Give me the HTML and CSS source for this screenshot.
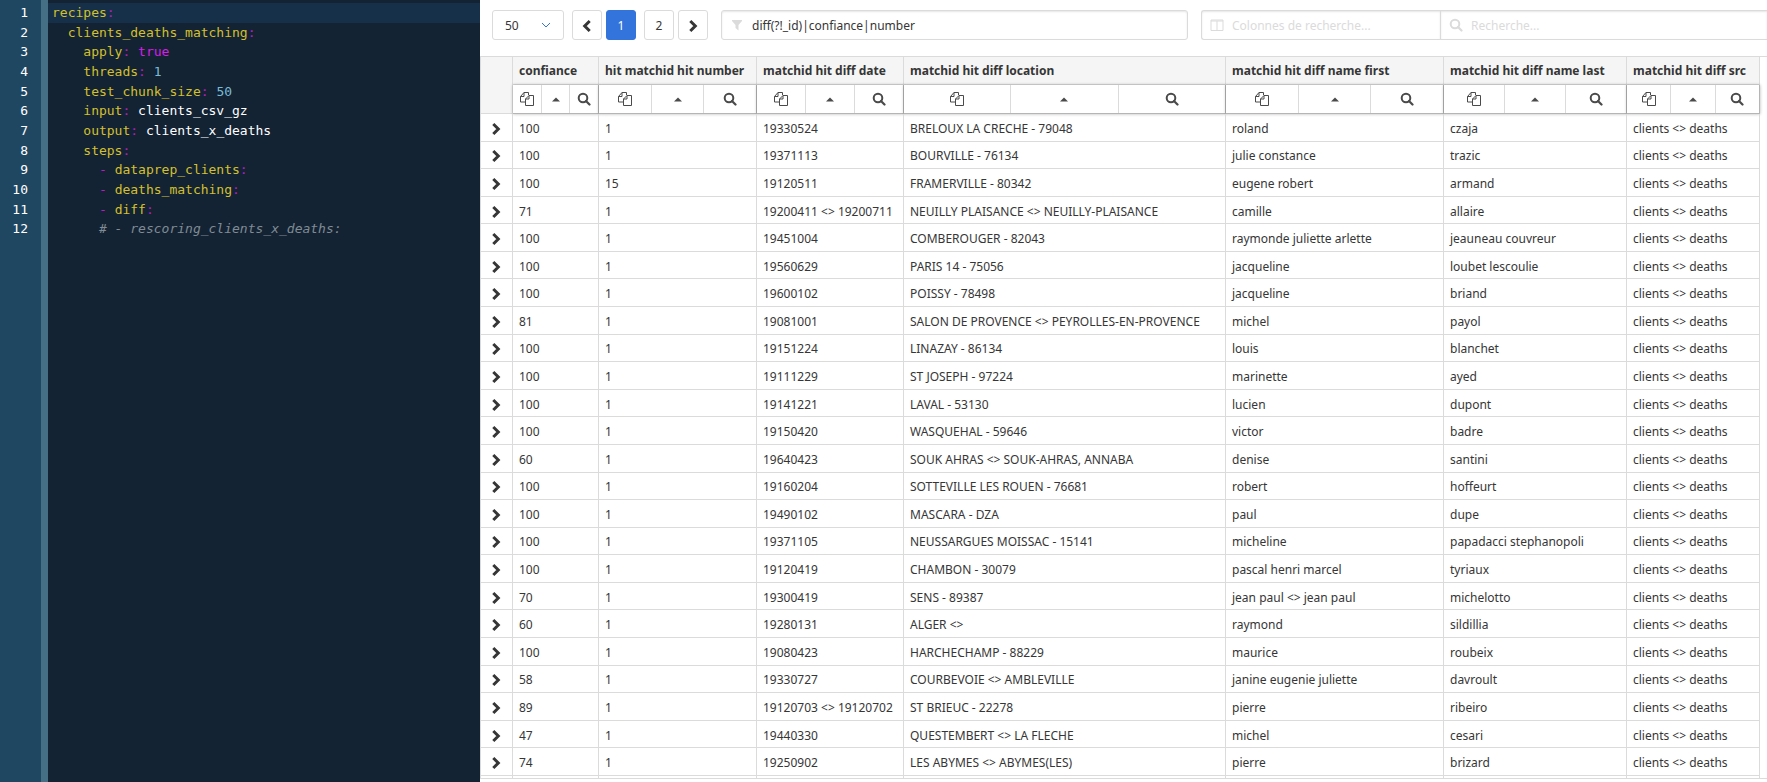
FILE: index.html
```html
<!DOCTYPE html>
<html lang="fr">
<head>
<meta charset="utf-8">
<title>matchID</title>
<link rel="stylesheet" href="styles.css">
</head>
<body>
<svg class="sprite" aria-hidden="true">
  <symbol id="copy" viewBox="0 0 14 14"><path d="M5.500 10H.5V4.500L4 .5h4.500V3M.5 4.500H4V.5M5.500 13.500V7L9 3.500h4.500v10zM5.500 7H9V3.500" fill="none" stroke="currentColor"/></symbol>
  <symbol id="caret" viewBox="0 0 14 14"><path d="M3 9.500 7 5.500l4 4z" fill="currentColor"/></symbol>
  <symbol id="search" viewBox="0 0 14 14"><circle cx="6" cy="6" r="4.300" fill="none" stroke="currentColor" stroke-width="2"/><path d="m9 9 3.500 3.500" stroke="currentColor" stroke-width="2.200" stroke-linecap="round"/></symbol>
  <symbol id="right" viewBox="0 0 14 14"><path d="m4.300 2 5 5-5 5" fill="none" stroke="currentColor" stroke-width="3"/></symbol>
  <symbol id="left" viewBox="0 0 14 14"><path d="m9.700 2-5 5 5 5" fill="none" stroke="currentColor" stroke-width="3"/></symbol>
  <symbol id="filter" viewBox="0 0 14 14"><path d="M2 2h10v1L8.500 7v5.500L5.500 10V7L2 3z" fill="currentColor"/></symbol>
  <symbol id="columns" viewBox="0 0 14 14"><path d="M1 2h12v10.500H1zM1 3h12M7 3v9" fill="none" stroke="currentColor"/></symbol>
</svg>
<div class="app">
  <section class="editor" aria-label="Recette">
    <ol class="code">
      <li class="active"><code><b>recipes</b><i>:</i></code></li>
      <li><code>  <b>clients_deaths_matching</b><i>:</i></code></li>
      <li><code>    <b>apply</b><i>:</i> <span class="bool">true</span></code></li>
      <li><code>    <b>threads</b><i>:</i> <span class="num">1</span></code></li>
      <li><code>    <b>test_chunk_size</b><i>:</i> <span class="num">50</span></code></li>
      <li><code>    <b>input</b><i>:</i> clients_csv_gz</code></li>
      <li><code>    <b>output</b><i>:</i> clients_x_deaths</code></li>
      <li><code>    <b>steps</b><i>:</i></code></li>
      <li><code>      <i>-</i> <b>dataprep_clients</b><i>:</i></code></li>
      <li><code>      <i>-</i> <b>deaths_matching</b><i>:</i></code></li>
      <li><code>      <i>-</i> <b>diff</b><i>:</i></code></li>
      <li><code>      <span class="comment"># - rescoring_clients_x_deaths:</span></code></li>
    </ol>
  </section>
  <main class="results">
    <div class="toolbar">
      <div class="size"><select aria-label="Lignes par page"><option>50</option><option>100</option></select><svg viewBox="0 0 10 6"><path d="m1 1 4 4 4-4" fill="none" stroke="currentColor"/></svg></div>
      <nav class="pages" aria-label="Pages">
        <button aria-label="Page précédente"><svg class="icon"><use href="#left"/></svg></button>
        <button class="current">1</button>
        <button class="second">2</button>
        <button aria-label="Page suivante"><svg class="icon"><use href="#right"/></svg></button>
      </nav>
      <label class="field filter"><svg class="icon"><use href="#filter"/></svg><input type="text" aria-label="Filtre des colonnes" value="diff(?!_id)|confiance|number"></label>
      <div class="group">
        <label class="field columns"><svg class="icon"><use href="#columns"/></svg><input type="text" aria-label="Colonnes de recherche" placeholder="Colonnes de recherche..."></label>
        <label class="field query"><svg class="icon"><use href="#search"/></svg><input type="text" aria-label="Recherche" placeholder="Recherche..."></label>
      </div>
    </div>
    <div class="sheet">
      <table>
        <colgroup><col class="c-open"><col class="c-conf"><col class="c-num"><col class="c-date"><col class="c-loc"><col class="c-first"><col class="c-last"><col class="c-src"></colgroup>
        <thead>
          <tr class="titles"><th rowspan="2"></th><th>confiance</th><th>hit matchid hit number</th><th>matchid hit diff date</th><th>matchid hit diff location</th><th>matchid hit diff name first</th><th>matchid hit diff name last</th><th>matchid hit diff src</th></tr>
          <tr class="tools" id="tools"></tr>
        </thead>
        <tbody id="rows"></tbody>
        <tfoot><tr><td></td><td></td><td></td><td></td><td></td><td></td><td></td><td></td></tr></tfoot>
      </table>
    </div>
  </main>
</div>
<script src="app.js"></script>
</body>
</html>
```
FILE: styles.css
```css
* { box-sizing: border-box; }
body { margin: 0; font: 12px/18px "Noto Sans", sans-serif; color: #363636; background: #fff; }
button, input, select { font: inherit; color: inherit; }
.sprite { display: none; }
.icon { width: 14px; height: 14px; display: block; flex: none; }
.app { display: grid; grid-template-columns: 480px minmax(0, 1fr); height: 100vh; }

.editor { background: linear-gradient(to right, #204762 41px, #446f85 41px 48px, #132334 48px); overflow: hidden; }
.code { margin: 0; padding: 3px 0 0; list-style: none; counter-reset: line; font: 13px/18px "DejaVu Sans Mono", monospace; display: flex; flex-direction: column; height: 239px; }
.code li { counter-increment: line; display: grid; grid-template-columns: 48px 1fr; flex: 1; align-items: stretch; align-content: stretch; }
.code li::before { content: counter(line); color: #fff; text-align: right; padding: 1px 20px 0 0; }
.code code { font: inherit; white-space: pre; color: #fff; padding: 1px 0 0 4px; }
.code .active code { background: #173049; }
.code b { font-weight: 400; color: #d3c02b; }
.code i { font-style: normal; color: #b31ec0; }
.bool { color: #d91ee6; }
.num { color: #79bbd6; }
.comment { color: #808b93; font-style: italic; }

.results { display: flex; flex-direction: column; min-width: 0; min-height: 0; padding-bottom: 3px; }
.toolbar { display: flex; height: 56px; flex: none; padding: 10px 0 16px 12px; }
.size { position: relative; width: 72px; }
.size select { width: 100%; height: 30px; appearance: none; background: #fff; border: 1px solid #dbdbdb; border-radius: 3px; padding: 1px 12px 0; }
.size svg { position: absolute; right: 13px; top: 12px; width: 10px; height: 6px; color: #3273dc; pointer-events: none; }
.pages { display: flex; gap: 4px; margin: 0 13px 0 8px; }
.pages button { width: 30px; height: 30px; padding: 1px 0 0; display: flex; align-items: center; justify-content: center; background: #fff; border: 1px solid #dbdbdb; border-radius: 3px; }
.pages .current { background: #3273dc; border-color: #3273dc; color: #fff; }
.pages .second { margin-left: 4px; }
.field { display: flex; align-items: center; gap: 8px; height: 30px; min-width: 0; padding-left: 8px; border: 1px solid #dbdbdb; border-radius: 3px; box-shadow: inset 0 1px 2px rgba(10, 10, 10, .1); color: #dbdbdb; }
.field input { flex: 1; min-width: 0; border: 0; outline: 0; background: none; padding: 1px 0 0; color: #363636; }
.field input::placeholder { color: #dbdbdb; opacity: 1; }
.filter { flex: 457 1 0; margin-right: 13px; }
.group { display: flex; flex: 566 1 0; min-width: 0; }
.columns { flex: 230 1 0; border-radius: 3px 0 0 3px; border-right: 0; }
.query { flex: 318 1 0; border-radius: 0; border-right: 0; }

.sheet { flex: 1; min-height: 0; border: solid #dbdbdb; border-width: 1px 0; overflow: hidden; }
table { width: calc(100% - 8px); height: 100%; table-layout: fixed; border-collapse: separate; border-spacing: 0; border-left: 1px solid #dbdbdb; }
.c-open { width: 32px; }
.c-conf { width: 86px; }
.c-num { width: 158px; }
.c-date { width: 147px; }
.c-loc { width: 322px; }
.c-first { width: 218px; }
.c-last { width: 183px; }
.c-src { width: 133px; }
th, td { padding: 0 0 0 6px; border: solid #dbdbdb; border-width: 0 1px 1px 0; text-align: left; white-space: nowrap; vertical-align: middle; }
thead th { background: #f5f5f5; }
.titles { height: 28px; }
.tools { height: 29px; }
.tools td { padding: 0; border-color: #b5b5b5; box-shadow: 0 0 3px rgba(10, 10, 10, .3); background: #fff; }
.tools div { display: flex; height: 28px; }
.tools button { flex: 1; padding: 0; border: 0; border-right: 1px solid #dbdbdb; background: none; display: flex; align-items: center; justify-content: center; color: #4a4a4a; }
.tools button:last-child { border-right: 0; }
tbody td { padding-top: 3px; }
tbody td:first-child { padding-left: 8px; }
tbody button { display: block; padding: 0; border: 0; background: none; }
tfoot tr { height: 2px; }
tfoot td { border-bottom: 0; height: 2px; }
```
FILE: app.js
```js
const rows = `100|1|19330524|BRELOUX LA CRECHE - 79048|roland|czaja
100|1|19371113|BOURVILLE - 76134|julie constance|trazic
100|15|19120511|FRAMERVILLE - 80342|eugene robert|armand
71|1|19200411 <> 19200711|NEUILLY PLAISANCE <> NEUILLY-PLAISANCE|camille|allaire
100|1|19451004|COMBEROUGER - 82043|raymonde juliette arlette|jeauneau couvreur
100|1|19560629|PARIS 14 - 75056|jacqueline|loubet lescoulie
100|1|19600102|POISSY - 78498|jacqueline|briand
81|1|19081001|SALON DE PROVENCE <> PEYROLLES-EN-PROVENCE|michel|payol
100|1|19151224|LINAZAY - 86134|louis|blanchet
100|1|19111229|ST JOSEPH - 97224|marinette|ayed
100|1|19141221|LAVAL - 53130|lucien|dupont
100|1|19150420|WASQUEHAL - 59646|victor|badre
60|1|19640423|SOUK AHRAS <> SOUK-AHRAS, ANNABA|denise|santini
100|1|19160204|SOTTEVILLE LES ROUEN - 76681|robert|hoffeurt
100|1|19490102|MASCARA - DZA|paul|dupe
100|1|19371105|NEUSSARGUES MOISSAC - 15141|micheline|papadacci stephanopoli
100|1|19120419|CHAMBON - 30079|pascal henri marcel|tyriaux
70|1|19300419|SENS - 89387|jean paul <> jean paul|michelotto
60|1|19280131|ALGER <>|raymond|sildillia
100|1|19080423|HARCHECHAMP - 88229|maurice|roubeix
58|1|19330727|COURBEVOIE <> AMBLEVILLE|janine eugenie juliette|davroult
89|1|19120703 <> 19120702|ST BRIEUC - 22278|pierre|ribeiro
47|1|19440330|QUESTEMBERT <> LA FLECHE|michel|cesari
74|1|19250902|LES ABYMES <> ABYMES(LES)|pierre|brizard`.split("\n");

const button = (label, id) =>
  `<button aria-label="${label}"><svg class="icon"><use href="#${id}"/></svg></button>`;

document.getElementById("tools").innerHTML =
  `<td><div>${button("Copier", "copy")}${button("Trier", "caret")}${button("Chercher", "search")}</div></td>`.repeat(7);

const body = document.getElementById("rows");
for (const line of rows) {
  const tr = body.insertRow();
  tr.insertCell().innerHTML = button("Déplier", "right");
  for (const value of [...line.split("|"), "clients <> deaths"]) {
    tr.insertCell().textContent = value;
  }
}
```
